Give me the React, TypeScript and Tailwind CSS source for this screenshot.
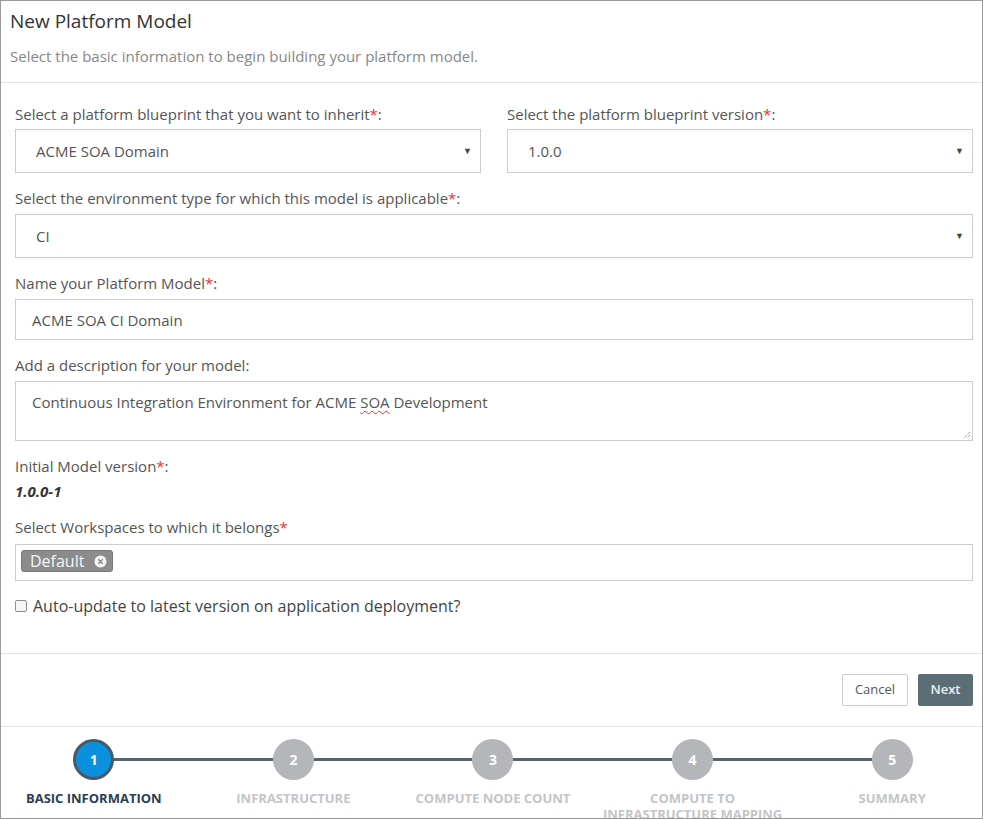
import React from 'react';

const steps = [
  { n: 1, label: ['BASIC INFORMATION'] },
  { n: 2, label: ['INFRASTRUCTURE'] },
  { n: 3, label: ['COMPUTE NODE COUNT'] },
  { n: 4, label: ['COMPUTE TO', 'INFRASTRUCTURE MAPPING'] },
  { n: 5, label: ['SUMMARY'] },
];

const Req = () => <span className="text-[#e5322d]">*</span>;

const FakeSelect: React.FC<{ value: string }> = ({ value }) => (
  <div className="h-[44px] border border-[#cccccc] bg-white flex items-center justify-between pl-5 pr-[8px] text-[15px] text-[#555]">
    <span>{value}</span>
    <span className="text-[9px] text-[#444]">▼</span>
  </div>
);

export default function App() {
  return (
    <div className="w-[983px] h-[819px] border border-[#9a9a9a] bg-white overflow-hidden font-['Open_Sans',sans-serif]">
      <div className="px-[9px] pt-[7px] pb-[16px] border-b border-[#e3e3e3]">
        <h1 className="text-[19px] leading-[26px] text-[#333]">New Platform Model</h1>
        <p className="mt-[12px] text-[15px] leading-[20px] text-[#888]">
          Select the basic information to begin building your platform model.
        </p>
      </div>

      <div className="pl-[14px] pr-[9px] pt-[21px] pb-[37px] border-b border-[#e3e3e3] text-[15px] leading-[20px] text-[#555]">
        <div className="grid grid-cols-2 gap-x-[26px]">
          <div>
            <label className="block mb-[5px]">Select a platform blueprint that you want to inherit<Req />:</label>
            <FakeSelect value="ACME SOA Domain" />
          </div>
          <div>
            <label className="block mb-[5px]">Select the platform blueprint version<Req />:</label>
            <FakeSelect value="1.0.0" />
          </div>
        </div>

        <label className="block mt-[15px] mb-[6px]">Select the environment type for which this model is applicable<Req />:</label>
        <FakeSelect value="CI" />

        <label className="block mt-[15px] mb-[6px]">Name your Platform Model<Req />:</label>
        <div className="h-[41px] border border-[#cccccc] flex items-center pl-[16px]">ACME SOA CI Domain</div>

        <label className="block mt-[15px] mb-[6px]">Add a description for your model:</label>
        <div className="relative h-[60px] border border-[#cccccc] pl-[16px] pt-[10px]">
          Continuous Integration Environment for ACME{' '}
          <span className="underline decoration-wavy decoration-[#e5322d] decoration-1 underline-offset-2">SOA</span>{' '}
          Development
          <svg className="absolute right-[1px] bottom-[1px]" width="8" height="8" viewBox="0 0 8 8">
            <path d="M7 1 L1 7 M7 4 L4 7" stroke="#777" strokeWidth="1" strokeDasharray="1 1" />
          </svg>
        </div>

        <label className="block mt-[15px]">Initial Model version<Req />:</label>
        <div className="mt-[5px] font-bold italic text-[#333]">1.0.0-1</div>

        <label className="block mt-[16px] mb-[7px]">Select Workspaces to which it belongs<Req /></label>
        <div className="h-[37px] border border-[#cccccc] flex items-center pl-[5px] pb-[3px]">
          <span className="inline-flex items-center h-[22px] gap-[10px] pl-[8px] pr-[5px] rounded-[3px] bg-[#8c8c8c] border border-[#777] text-[#f7f7f7] text-[16px]">
            Default
            <svg width="13" height="13" viewBox="0 0 13 13">
              <circle cx="6.5" cy="6.5" r="6" fill="#f4f4f4" />
              <path d="M4.3 4.3 L8.7 8.7 M8.7 4.3 L4.3 8.7" stroke="#8c8c8c" strokeWidth="1.6" />
            </svg>
          </span>
        </div>

        <label className="mt-[15px] flex items-center gap-[6px] text-[16px] text-[#444]">
          <span className="w-[12px] h-[12px] border border-[#8e8e8e] rounded-[2px] bg-[#f6f6f6]" />
          Auto-update to latest version on application deployment?
        </label>
      </div>

      <div className="flex justify-end gap-[10px] px-[9px] pt-[20px] pb-[20px] border-b border-[#e3e3e3] text-[13px]">
        <button className="h-[32px] w-[66px] border border-[#cccccc] rounded-[2px] bg-white text-[#555]">Cancel</button>
        <button className="h-[32px] w-[55px] rounded-[2px] bg-[#5b6e76] text-[#eef2f3] font-semibold">Next</button>
      </div>

      <div className="grid grid-cols-5 w-[998px] ml-[-7px] pt-[12px]">
        {steps.map((s, i) => (
          <div key={s.n} className="flex flex-col items-center">
            <div className="relative w-full flex justify-center">
              {i > 0 && <div className="absolute left-0 right-1/2 top-[19px] h-[3px] bg-[#56626c]" />}
              {i < steps.length - 1 && <div className="absolute left-1/2 right-0 top-[19px] h-[3px] bg-[#56626c]" />}
              <div
                className={
                  s.n === 1
                    ? 'relative z-10 w-[41px] h-[41px] rounded-full bg-[#0a90dc] border-[3px] border-[#4b5966] flex items-center justify-center text-white font-bold text-[14px]'
                    : 'relative z-10 w-[41px] h-[41px] rounded-full bg-[#b4b6b9] flex items-center justify-center text-white font-bold text-[14px]'
                }
              >
                {s.n}
              </div>
            </div>
            <div
              className={
                s.n === 1
                  ? 'mt-[10px] text-[13px] leading-[16px] font-bold text-center text-[#2e3d4f] whitespace-nowrap'
                  : 'mt-[10px] text-[13px] leading-[16px] font-bold text-center text-[#c3c5c7] whitespace-nowrap'
              }
            >
              {s.label.map((l) => (
                <div key={l}>{l}</div>
              ))}
            </div>
          </div>
        ))}
      </div>
    </div>
  );
}
